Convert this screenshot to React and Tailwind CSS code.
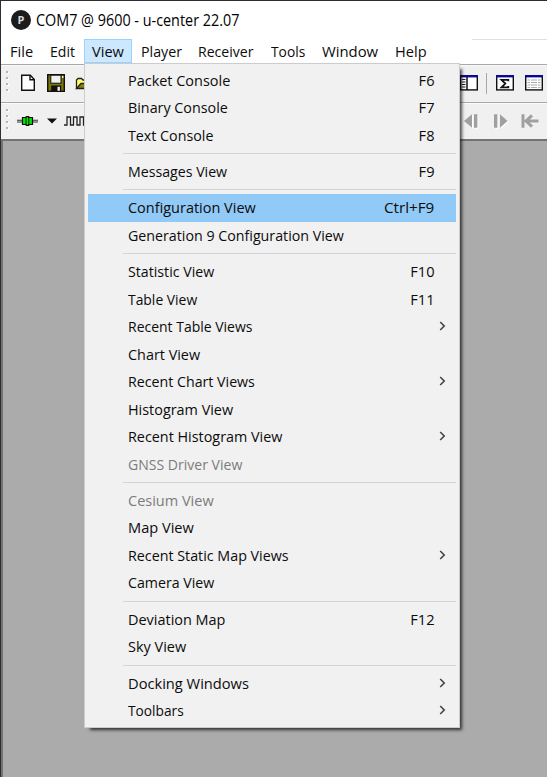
import React, { useLayoutEffect, useRef, useState } from "react";

const menuBar = [
  { label: "File", w: 23, box: "w-[43px] pl-[9px]" },
  { label: "Edit", w: 25, box: "w-[40px] pl-[6px]" },
  { label: "View", w: 32, box: "w-[48px] pl-[7px] bg-[#cce8ff] border border-[#99d1ff]" },
  { label: "Player", w: 41, box: "w-[58px] pl-[9px]" },
  { label: "Receiver", w: 56, box: "w-[73px] pl-[8px]" },
  { label: "Tools", w: 34, box: "w-[51px] pl-[7.5px]" },
  { label: "Window", w: 56, box: "w-[73px] pl-[8px]" },
  { label: "Help", w: 32, box: "w-[50px] pl-[8px]" },
];

const items = [
  { label: "Packet Console", w: 102, key: "F6", kw: 16 },
  { label: "Binary Console", w: 100, key: "F7", kw: 16 },
  { label: "Text Console", w: 85, key: "F8", kw: 16 },
  null,
  { label: "Messages View", w: 99, key: "F9", kw: 16 },
  null,
  { label: "Configuration View", w: 128, key: "Ctrl+F9", kw: 50, active: true },
  { label: "Generation 9 Configuration View", w: 215.5 },
  null,
  { label: "Statistic View", w: 86.5, key: "F10", kw: 24 },
  { label: "Table View", w: 69.5, key: "F11", kw: 24 },
  { label: "Recent Table Views", w: 124.5, sub: true },
  { label: "Chart View", w: 72 },
  { label: "Recent Chart Views", w: 126.5, sub: true },
  { label: "Histogram View", w: 105.5 },
  { label: "Recent Histogram View", w: 154.5, sub: true },
  { label: "GNSS Driver View", w: 114.5, disabled: true },
  null,
  { label: "Cesium View", w: 85.5, disabled: true },
  { label: "Map View", w: 66 },
  { label: "Recent Static Map Views", w: 160.5, sub: true },
  { label: "Camera View", w: 86.5 },
  null,
  { label: "Deviation Map", w: 97, key: "F12", kw: 24 },
  { label: "Sky View", w: 58.5 },
  null,
  { label: "Docking Windows", w: 120.5, sub: true },
  { label: "Toolbars", w: 55.5, sub: true },
];

// Condenses its glyphs so that the label takes a given width.
function Label({ text, width }) {
  const ref = useRef(null);
  const [fit, setFit] = useState({});
  useLayoutEffect(() => {
    const natural = ref.current.offsetWidth;
    setFit({ transform: `scaleX(${width / natural})`, marginRight: width - natural });
  }, []);
  return (
    <span ref={ref} className="inline-block origin-left whitespace-pre" style={fit}>
      {text}
    </span>
  );
}

function Grip() {
  return (
    <svg className="shrink-0" width="4" height="26" viewBox="0 0 4 26">
      {[1, 7, 13, 19].map((y) => (
        <g key={y}>
          <rect x="1" y={y + 1} width="2" height="2" fill="#fff" />
          <rect x="0" y={y} width="2" height="2" fill="#b4b4b4" />
        </g>
      ))}
    </svg>
  );
}

function PanelIcon({ children }) {
  return (
    <svg className="shrink-0" width="18" height="16" viewBox="0 0 18 16">
      <rect x="0.7" y="0.7" width="16.6" height="14.2" fill="#fff" stroke="#111" strokeWidth="1.4" />
      <rect x="0" y="0" width="18" height="2.4" fill="#0a0a96" />
      {children}
    </svg>
  );
}

function FileTools() {
  return (
    <div className="flex h-[38px] items-center border-t border-[#a8a8a8] bg-[#f0f0f0] pb-[1px] pl-[5px] shadow-[inset_0_1px_0_#fafafa]">
      <Grip />
      <svg className="ml-[10px] shrink-0" width="16" height="18" viewBox="0 0 16 18">
        <path d="M1.7 1.2h8.6l4 4.3V16.3H1.7z" fill="#fff" stroke="#111" strokeWidth="1.4" />
        <path d="M10 1.2v4.6h4.3" fill="none" stroke="#111" strokeWidth="1.4" />
      </svg>
      <svg className="ml-[11px] shrink-0" width="18" height="18" viewBox="0 0 18 18">
        <rect x="0.7" y="0.7" width="16.6" height="16.6" fill="#77770a" stroke="#111" strokeWidth="1.4" />
        <rect x="3.8" y="1.2" width="10.2" height="8" fill="#f0f0f0" stroke="#111" strokeWidth="1" />
        <rect x="15" y="2" width="1.4" height="2" fill="#f0f0f0" />
        <rect x="4.2" y="11.5" width="10" height="5.5" fill="#111" />
        <rect x="10.5" y="12.8" width="2.4" height="4" fill="#f0f0f0" />
      </svg>
      <svg className="ml-[10px] shrink-0" width="18" height="18" viewBox="0 0 18 18">
        <path d="M1.500 14V6L3 4.500h3.500L8 6h6v4" fill="#ffff70" stroke="#222" strokeWidth="1.300" />
        <path d="M1.500 14.500 6 9.500h11l-4 5z" fill="#85850a" stroke="#222" strokeWidth="1.300" />
      </svg>
      <div className="ml-auto flex items-center pr-[4px]">
        <PanelIcon>
          <path d="M7 2v13" stroke="#111" strokeWidth="1.500" />
          <path d="M2 4.500h3.500M2 7h3.500M2 9.500h3.500M2 12h3.500" stroke="#222" strokeWidth="1" />
        </PanelIcon>
        <div className="ml-[8px] h-[21px] w-px bg-[#a8a8a8]" />
        <div className="ml-[9px] flex">
          <PanelIcon>
            <path d="M12.300 6.300V4.800H5.500L9.300 8.600 5.500 12.400h6.800V10.900" fill="none" stroke="#111" strokeWidth="1.800" />
          </PanelIcon>
        </div>
        <div className="ml-[11px] flex">
          <PanelIcon>
            <path d="M2.500 5h13M2.500 7.500h13M2.500 10h13M2.500 12.500h13" stroke="#aaa" strokeWidth="1.200" />
            <path d="M5.500 3v11M12.500 3v11" stroke="#fff" strokeWidth="1" />
          </PanelIcon>
        </div>
      </div>
    </div>
  );
}

function PlayerTools() {
  return (
    <div className="flex h-[37px] items-center border-t border-[#a8a8a8] bg-[#f0f0f0] pl-[5px] shadow-[inset_0_1px_0_#fafafa]">
      <Grip />
      <svg className="ml-[7px] shrink-0" width="21" height="10" viewBox="0 0 21 10">
        <path d="M0 4.200h21M0 6h21" stroke="#333" strokeWidth="1.100" />
        <path d="M5.500 1.500h3l1-.8h2l1 .8h3v7h-3l-1 .8h-2l-1-.8h-3z" fill="#00e600" stroke="#111" strokeWidth="1.200" />
        <path d="M9 1v8M11.800 1v8" stroke="#111" strokeWidth="1" />
      </svg>
      <svg className="ml-[9px] shrink-0" width="10" height="6" viewBox="0 0 10 6">
        <path d="M0 .500h10L5 5.500z" fill="#111" />
      </svg>
      <svg className="ml-[7px] shrink-0" width="22" height="10" viewBox="0 0 22 10">
        <path d="M0 9h3V1h3.500v8h3V1H13v8h3V1h3.500v8H22" fill="none" stroke="#222" strokeWidth="1.300" />
      </svg>
      <svg className="ml-auto mr-[8px] shrink-0" width="75" height="16" viewBox="0 0 75 16">
        <path d="M1 9 9 2.300v13.400zM11 2.300h3.400v13.400H11zM31 2.300h3.400v13.400H31zM44.500 9 37 2.300v13.400z" fill="#fff" />
        <path d="M0 8 8 1.300v13.400zM10 1.300h3.400v13.400H10zM30 1.300h3.400v13.400H30zM43.500 8 36 1.300v13.400z" fill="#a0a0a0" />
        <path d="M59 1.300v13.400M61.500 8h13M68 2.300 62 8l6 5.700" fill="none" stroke="#a0a0a0" strokeWidth="3" />
      </svg>
    </div>
  );
}

function ViewMenu() {
  return (
    <div className="absolute left-[83px] top-[62px] h-[665px] w-[376px] border border-[#cccccc] bg-[#f1f1f1] px-[3px] pt-[2.700px] shadow-[4px_4px_3px_-2px_rgba(0,0,0,0.7)]">
      {items.map((it, i) =>
        it ? (
          <div
            key={i}
            className={
              "flex h-[27.500px] items-center pb-[1.600px] pl-[40px] pr-[10px] " +
              (it.active ? "bg-[#91c9f7] " : "") +
              (it.disabled ? "text-[#7c7c7c]" : "text-[#0c0c0c]")
            }
          >
            <Label text={it.label} width={it.w} />
            {it.key && (
              <span className="ml-auto mr-[11.500px]">
                <Label text={it.key} width={it.kw} />
              </span>
            )}
            {it.sub && (
              <svg className="ml-auto" width="7" height="10" viewBox="0 0 7 10">
                <path d="M1.200 1 5.200 5l-4 4" fill="none" stroke="#444" strokeWidth="1.600" />
              </svg>
            )}
          </div>
        ) : (
          <div key={i} className="flex h-[8.830px] items-center pl-[35px]">
            <div className="h-px w-full bg-[#d4d4d4]" />
          </div>
        )
      )}
    </div>
  );
}

export default function App() {
  return (
    <div className="relative flex h-[777px] w-[547px] flex-col overflow-hidden border-l border-t border-[#2d2d35] bg-white font-['Open_Sans','Noto_Sans',sans-serif] text-[14.600px] leading-[20px] text-[#0c0c0c]">
      <div className="flex h-[38px] items-center pl-[10px] text-[16.500px] text-black">
        <div className="flex h-[20px] w-[20px] items-center justify-center rounded-full bg-[#1c1c1c] text-[11px] font-bold text-[#d8d8d8]">
          P
        </div>
        <div className="ml-[4.500px]">
          <Label text="COM7 @ 9600 - u-center 22.07" width={203} />
        </div>
      </div>
      <div className="flex h-[25px] shrink-0">
        {menuBar.map((m) => (
          <div key={m.label} className={"flex h-[24px] shrink-0 items-center " + m.box}>
            <Label text={m.label} width={m.w} />
          </div>
        ))}
        <div className="ml-[35px] h-px w-[80px] shrink-0 bg-[#e0e0e0]" />
      </div>
      <FileTools />
      <PlayerTools />
      <div className="flex-1 border-l-2 border-t-2 border-[#737373] bg-[#ababab]" />
      <ViewMenu />
    </div>
  );
}
